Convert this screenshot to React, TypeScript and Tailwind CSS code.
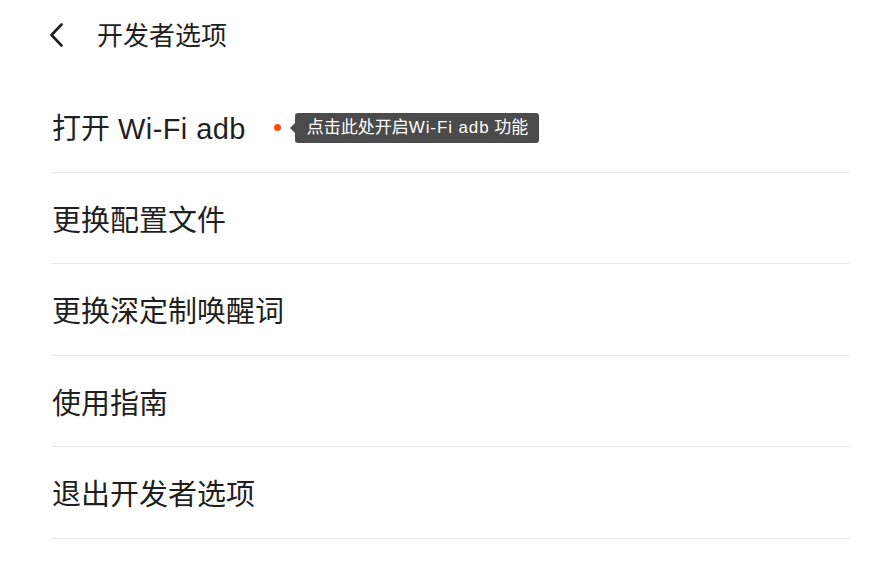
import React from "react";

const font = { fontFamily: '"Liberation Sans", "Noto Sans CJK SC", sans-serif' };

function Row({ children }: { children: React.ReactNode }) {
  return (
    <div className="flex h-[91.5px] items-center border-b border-[#e9e9e9] pt-[7px]">
      {children}
    </div>
  );
}

export default function App() {
  const items = ["更换配置文件", "更换深定制唤醒词", "使用指南", "退出开发者选项"];
  return (
    <div className="w-[886px] h-[562px] bg-white text-[#1f1f1f] overflow-hidden" style={font}>
      <div className="flex h-[70px] items-center pl-[48px] pt-[2px]">
        <svg width="18" height="24" viewBox="0 0 18 24" className="mr-[31px] -mt-[2px]">
          <path d="M13.5 1.5 L3.5 12 L13.5 22.5" fill="none" stroke="#1f1f1f" strokeWidth="2.6" strokeLinecap="round" strokeLinejoin="round" />
        </svg>
        <span className="text-[26px] leading-none">开发者选项</span>
      </div>
      <div className="ml-[52px] mr-[36px] mt-[11px]">
        <Row>
          <span className="text-[29px] leading-none">
            打开 <span className="tracking-[0.4px]">Wi-Fi adb</span>
          </span>
          <span className="ml-[28px] -mt-[5px] h-[7px] w-[7px] rounded-full bg-[#ff4a0d]" />
          <div className="relative ml-[14px] -mt-[4px] flex h-[30px] items-center rounded-[3px] bg-[#4b4b4b] pl-[12px] pr-[11px] text-[17px] leading-none text-white">
            <span className="absolute left-[-5px] top-[10px] h-0 w-0 border-y-[5px] border-r-[5px] border-y-transparent border-r-[#4b4b4b]" />
            <span>
              点击此处开启<span className="tracking-[0.9px]">Wi-Fi adb</span>{" "}功能
            </span>
          </div>
        </Row>
        {items.map((t) => (
          <Row key={t}>
            <span className="text-[29px] leading-none">{t}</span>
          </Row>
        ))}
      </div>
    </div>
  );
}
